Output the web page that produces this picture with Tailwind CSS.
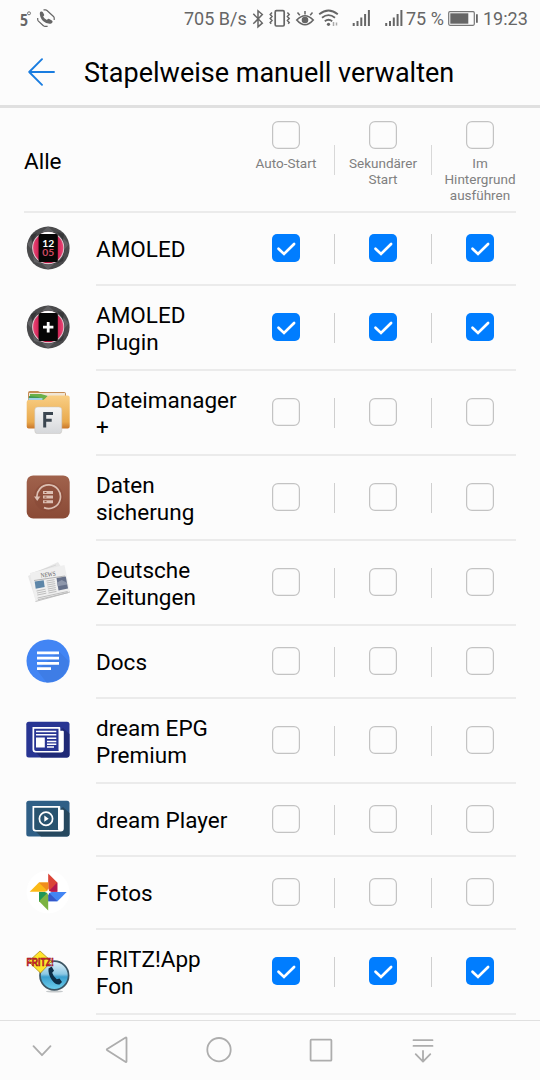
<!DOCTYPE html>
<html lang="de">
<head>
    <meta charset="UTF-8">
    <meta name="viewport" content="width=device-width, initial-scale=1.0">
    <title>Stapelweise manuell verwalten</title>
    <script src="https://cdn.jsdelivr.net/npm/@tailwindcss/browser@4"></script>
</head>
<body class="w-[540px] h-[1080px] overflow-hidden bg-[#fcfcfc] font-['Roboto',sans-serif] text-black flex flex-col">

    <!-- Icon sprites -->
    <svg width="0" height="0" class="absolute">
        <defs>
            <linearGradient id="pink" x1="0" x2="1" y1="0" y2="0"><stop offset="0" stop-color="#f0487a"/><stop offset=".3" stop-color="#b8103f"/><stop offset=".7" stop-color="#b8103f"/><stop offset="1" stop-color="#f0487a"/></linearGradient>
            <linearGradient id="folder" x1="0" x2="0" y1="0" y2="1"><stop offset="0" stop-color="#f9cf85"/><stop offset=".8" stop-color="#e9a94c"/><stop offset="1" stop-color="#c9762a"/></linearGradient>
            <linearGradient id="tile" x1="0" x2="0" y1="0" y2="1"><stop offset="0" stop-color="#f6f6f6"/><stop offset="1" stop-color="#d5d7da"/></linearGradient>
            <linearGradient id="brown" x1="0" x2="0" y1="0" y2="1"><stop offset="0" stop-color="#a0624c"/><stop offset="1" stop-color="#8a4a36"/></linearGradient>
            <linearGradient id="ball" x1="0" x2="0" y1="0" y2="1"><stop offset="0" stop-color="#e4f3fa"/><stop offset=".45" stop-color="#8cc8e4"/><stop offset=".55" stop-color="#3b9fce"/><stop offset="1" stop-color="#6fd0ee"/></linearGradient>
        </defs>

        <symbol id="amoled" viewBox="0 0 44 44">
            <circle cx="22.2" cy="22" r="21.4" fill="#4a4a4c"/>
            <path d="M22 .6 16 6h12zM22 43.4 16 38h12zM1 18l6-6-1 12zM43 18l-6-6 1 12zM8 36l8 2-9-8z" fill="#606063"/>
            <path d="M5 9l6-2-5 10zM38 8l-7-2 6 8zM37 35l-7 3 8-8z" fill="#363638"/>
            <circle cx="22.2" cy="22" r="16.6" fill="#333335"/>
            <circle cx="22.2" cy="22" r="15.6" fill="url(#pink)" stroke="#d9c3ca" stroke-width="1.1"/>
            <path d="M14 8.5a16 16 0 0 1 16.4 0z" fill="#fff"/>
            <rect x="12.6" y="8" width="19.2" height="28" rx="1.5" fill="#060606"/>
        </symbol>

        <symbol id="plugin" viewBox="0 0 44 44">
            <use href="#amoled" width="44" height="44"/>
            <path d="M22.2 17v10.4M17 22.2h10.4" stroke="#fff" stroke-width="2.8"/>
        </symbol>

        <symbol id="files" viewBox="0 0 44 44">
            <path d="M2 3q0-2 2-2h8l2 1h24q2 0 2 2v10H2z" fill="#c68d55"/>
            <path d="M3 3h36v10H3z" fill="#f1e6d6"/>
            <path d="M4 4h11l7 2-4 5H4z" fill="#6bb04a"/>
            <path d="M3 6l9 1 5 2-3 2H3z" fill="#3f9a55"/>
            <path d="M2.5 8h14v4h-14z" fill="#9fd0e6"/>
            <path d="M.7 12q0-2 2-2h13.500q1.500 0 3-1.500l2-2q1-1 2.500-1H41.700q2 0 2 2V36.500q0 2-2 2H2.700q-2 0-2-2z" fill="url(#folder)"/>
            <rect x="8.800" y="17" width="27" height="26.800" rx="3" fill="url(#tile)" stroke="#c8c4bd" stroke-width=".5"/>
            <path d="M18.700 37.500V23.600h8.300M18.700 30.300h7" fill="none" stroke="#3b4650" stroke-width="3"/>
        </symbol>

        <symbol id="backup" viewBox="0 0 44 44">
            <rect x=".7" y=".4" width="43" height="43" rx="6.500" fill="url(#brown)"/>
            <circle cx="22.500" cy="22" r="14.500" fill="#854735" opacity=".5"/>
            <path d="M11 23.500A11.800 11.800 0 1 1 18 32.600" fill="none" stroke="#dcbfb2" stroke-width="1.700"/>
            <path d="M8 21.500h6.400L11.200 26z" fill="#dcbfb2"/>
            <path d="M17 16h10v3H17zM17 20.600h10v3H17zM17 25.200h10v3H17z" fill="#dcbfb2"/>
            <path d="M18.500 17.500h2M18.500 22.100h2M18.500 26.700h2" stroke="#8a4a36" stroke-width="1"/>
        </symbol>

        <symbol id="news" viewBox="0 0 44 44">
            <path d="M2 16 32 2l5 8-28 28z" fill="#e8e8e8"/>
            <path d="M4 14l26-9M5 17l26-9" stroke="#cfcfcf" stroke-width=".7"/>
            <path d="M4 13 38.500 5 44 32 9.500 41.500z" fill="#efefef"/>
            <path d="M9.500 41.500 44 32" stroke="#c4c4c4"/>
            <path d="M8 20.500l31-4.500" stroke="#999" stroke-width=".7"/>
            <path d="M8.700 21.600l9-1.300 1 6.700-9 1.800z" fill="#5d86a8"/>
            <path d="M30.500 18l9.300-1.400 2.200 11.800-9.500 2.200z" fill="#66718a"/>
            <path d="M31.200 22.500l4.500-2.500 5 2.500.5 2-9.500 1.800z" fill="#8e97ab"/>
            <path d="M20.500 21l8-1.300M20.800 23l8-1.300M21.200 25l8-1.400M21.500 27l8-1.400M21.800 29l8-1.400M22.100 31l8-1.500M10.500 31l9-1.800M11 33l9-1.800M11.300 35l9-1.800M11.600 38l30-6.500M12 39.700l30-7M22.500 33l8-1.600" stroke="#b8b8b8" stroke-width=".9"/>
        </symbol>

        <symbol id="docs" viewBox="0 0 44 44">
            <circle cx="22.100" cy="22" r="21.600" fill="#4285f4"/>
            <path d="M33 12.600 42.500 22a21 21 0 0 1-22 21.400L11 31z" fill="#3e7de6"/>
            <path d="M11 12.500h22v2.800H11zM11 17.700h22v2.800H11zM11 23h22v2.800H11zM11 28.200h14V31H11z" fill="#fff"/>
        </symbol>

        <symbol id="epg" viewBox="0 0 44 44">
            <rect x=".3" y="3.700" width="43.200" height="35.700" rx="2.500" fill="#283593"/>
            <path d="M37 10l6.500 6v21q0 2.400-2.500 2.400H15L8 33z" fill="#1f2976"/>
            <path d="M6.500 9h27q.8 0 .8.800v3h2.500q1 0 1 1V31.500q0 3-3 3H9.500q-3 0-3-3z" fill="#fff"/>
            <path d="M8.200 10.800h24.300V31.500q0 1.500.6 1.500H10q-1.800 0-1.800-1.800z" fill="#283593"/>
            <path d="M10 12.800h20.300v1.500H10zM10 16h20.300v1.500H10zM10 19.500h8.800V29.500H10zM21 19.500h9.300V21H21zM21 22.700h9.300v1.500H21zM21 25.600h9.300v1.500H21zM21 28.300h7v1.500h-7z" fill="#fff"/>
        </symbol>

        <symbol id="player" viewBox="0 0 44 44">
            <rect x=".3" y="3.700" width="43.200" height="35.700" rx="2.500" fill="#2f5f86"/>
            <path d="M37 10l6.500 6v21q0 2.400-2.500 2.400H15L8 33z" fill="#26485f"/>
            <path d="M6.500 9h27q.8 0 .8.800v3h2.500q1 0 1 1V31.500q0 3-3 3H9.500q-3 0-3-3z" fill="#fff"/>
            <path d="M8.200 10.800h23.800V31.500q0 1.500.6 1.500H10q-1.800 0-1.800-1.800z" fill="#28536f"/>
            <circle cx="20" cy="21.700" r="6.600" fill="none" stroke="#fff" stroke-width="1.700"/>
            <path d="M18.300 18.600v6.200l4.400-3.100z" fill="#fff"/>
        </symbol>

        <symbol id="fotos" viewBox="0 0 44 44">
            <circle cx="22" cy="22" r="21.500" fill="#fff"/>
            <path d="M22.200 3.500 31.300 12.500V21.800H22.200z" fill="#db4437"/>
            <path d="M31.300 12.500V21.800H22.200z" fill="#b3174f"/>
            <path d="M40.700 22 31.500 31.300H22.200V22z" fill="#4285f4"/>
            <path d="M31.500 31.300H22.200V22z" fill="#3557c9"/>
            <path d="M22.200 40.500 13 31.300V22H22.200z" fill="#7cb342"/>
            <path d="M13 31.300V22H22.200z" fill="#1f9657"/>
            <path d="M3.700 21.800 12.900 12.600H22.200V21.800z" fill="#fbb917"/>
            <path d="M12.900 12.600H22.200V21.800z" fill="#f08c1c"/>
            <path d="M22.200 18.600l1 2.300 2.400 1-2.400 1-1 2.400-1-2.400-2.400-1 2.400-1z" fill="#fff"/>
        </symbol>

        <symbol id="fritz" viewBox="0 0 44 44">
            <ellipse cx="28.500" cy="42.500" rx="8.500" ry="1" fill="#c5c9cb"/>
            <circle cx="28.300" cy="26.500" r="14.300" fill="url(#ball)" stroke="#3c5563" stroke-width="1.700"/>
            <path d="M14 2 25.500 12.500 14.500 24 2.500 12.500z" fill="#ffe52c" stroke="#b08d1c" stroke-width=".8"/>
            <path d="M22.500 19.500l3.200-2 2.300 4.200-1.800 2q1.200 4 4.600 6.500l2.700-.8 2.500 3.500-2.500 2.600q-4 .6-7.800-4.800-3.800-5.600-3.200-11.200z" fill="#0d2d45"/>
        </symbol>

        <symbol id="box-off" viewBox="0 0 28 28">
            <rect x=".6" y=".6" width="26.800" height="26.800" rx="5.400" fill="none" stroke="#c3c3c3" stroke-width="1.200"/>
        </symbol>
        <symbol id="box-on" viewBox="0 0 28 28">
            <rect width="28" height="28" rx="5" fill="#007dff"/>
            <path d="M6.500 14.700 12 19.900 22.100 10" fill="none" stroke="#fff" stroke-width="2.700" stroke-linecap="round"/>
        </symbol>
    </svg>

    <!-- Status bar -->
    <div class="h-[38px] shrink-0 flex items-center text-[18px] leading-none text-[#666]">
        <svg width="40" height="38" viewBox="18 0 40 38" class="ml-[18px] shrink-0" fill="none" stroke="#666">
            <text x="20" y="25.500" font-family="Noto Sans" font-weight="700" font-size="16" textLength="8" lengthAdjust="spacingAndGlyphs" fill="#666" stroke="none">5</text>
            <circle cx="29" cy="13.300" r="1.500" stroke-width=".9"/>
            <path d="M39.800 13.200q0-1.300 1.200-1.700 1.300-.3 1.900.8l1.200 2.200q.4.900-.4 1.600l-.6.500q1.200 2.300 3.900 3.300l.7-.8q.7-.7 1.600-.2l2.600 1.500q1 .7.600 1.800-.6 1.400-2 1.500-4.200.3-7.500-2.700-3.200-3.200-3.200-7.800z" fill="#666" stroke="none"/>
            <path d="M43.500 9.900h2q.8 0 1.500.6l6.500 6q.7.700.7 1.500v2M37.700 18v1.500q0 .9.700 1.600l5 4.600q.7.700 1.700.7h2.500" stroke-width="1.200"/>
        </svg>
        <span class="ml-[126px] w-[62px] whitespace-nowrap">705 B/s</span>
        <svg width="158" height="38" viewBox="246 0 158 38" class="shrink-0" fill="none" stroke="#666" stroke-width="1.500">
            <path d="M253.300 13.800l9 9.300-4.300 3.700V10.800l4.300 3.700-9 9.300"/>
            <rect x="275.200" y="10.700" width="9" height="15.300" rx="1.200" stroke-width="1.700"/>
            <path d="M272 12.500l-1.800 2 1.800 2-1.800 2 1.800 2-1.800 2 1 1.200M287.400 12.500l1.800 2-1.800 2 1.800 2-1.800 2 1.800 2-1 1.200" stroke-width="1.500"/>
            <path d="M296.800 20q8.200-8.500 16.400 0-8.200 9.500-16.400 0z" stroke-width="1.700"/>
            <circle cx="305" cy="20" r="3.300" fill="#666" stroke="none"/>
            <path d="M305 14.500v-3.500M299.800 15.300l-2.300-2.800M310.200 15.300l2.300-2.800"/>
            <path d="M319.200 14.300q9.300-7.500 18.600 0M322 17.800q6.500-5.300 13 0M324.800 21.200q3.700-3 7.400 0" stroke-width="1.800"/>
            <circle cx="328.500" cy="24.300" r="1.600" fill="#666" stroke="none"/>
            <path d="M333.500 22v4M336.500 22.500v3" stroke="#aaa"/>
            <path d="M352.700 23h2v3h-2zM356.500 21h2v5h-2zM360.300 17.500h2V26h-2zM364.100 14h2v12h-2zM367.900 10h2v16h-2zM385.200 23h2v3h-2zM389 21h2v5h-2zM392.800 17.500h2V26h-2zM396.600 14h2v12h-2zM400.400 10h2v16h-2z" fill="#666" stroke="none"/>
        </svg>
        <span class="ml-[2px] w-[40px] whitespace-nowrap">75 %</span>
        <svg width="34" height="38" viewBox="446 0 34 38" class="shrink-0">
            <rect x="448.700" y="11.700" width="25.600" height="13.600" rx="1.200" fill="none" stroke="#777" stroke-width="1.200"/>
            <path d="M450.300 13.300h18v10.400h-18z" fill="#666"/>
            <path d="M476 14.300h1.800v8.400H476z" fill="#666"/>
        </svg>
        <span class="ml-[3px]">19:23</span>
    </div>

    <!-- Title bar -->
    <header class="h-[70px] shrink-0 border-b-[3px] border-[#e0e0e0] flex items-center">
        <svg width="28" height="28" viewBox="0 0 28 28" class="ml-[28px]" fill="none" stroke="#1a7de0" stroke-width="1.900" stroke-linecap="round" stroke-linejoin="round">
            <path d="M14 1.200 1.200 14 14 26.800M1.200 14H26"/>
        </svg>
        <h1 class="ml-[28px] pt-[2px] text-[27px] leading-8 whitespace-nowrap">Stapelweise manuell verwalten</h1>
    </header>

    <main class="h-[912px] shrink-0 overflow-hidden">
        <!-- "Alle" row with the column captions -->
        <div class="ml-6 mr-6 h-[105px] border-b-2 border-[#ebebeb] flex">
            <div class="w-[214px] flex items-center text-[22.500px]"><span class="mt-1">Alle</span></div>
            <div class="w-[97px] flex">
                <div class="w-[96px] pt-[13px] text-center text-[13.500px] leading-4 text-[#808080]">
                    <svg width="28" height="28" class="mx-auto mb-[6px]"><use href="#box-off"/></svg>Auto-Start
                </div>
                <div class="w-px h-[30px] mt-[37px] bg-[#d8d8d8]"></div>
            </div>
            <div class="w-[97px] flex">
                <div class="w-[96px] pt-[13px] text-center text-[13.500px] leading-4 text-[#808080]">
                    <svg width="28" height="28" class="mx-auto mb-[6px]"><use href="#box-off"/></svg>Sekundärer<br>Start
                </div>
                <div class="w-px h-[30px] mt-[37px] bg-[#d8d8d8]"></div>
            </div>
            <div class="w-[96px] -mr-3 shrink-0 pt-[13px] text-center text-[13.500px] leading-4 text-[#808080]">
                <svg width="28" height="28" class="mx-auto mb-[6px]"><use href="#box-off"/></svg>Im<br>Hintergrund<br>ausführen
            </div>
        </div>

        <div id="app-list"></div>
    </main>

    <!-- Navigation bar -->
    <nav class="h-[60px] shrink-0 border-t border-[#e0e0e0]">
        <svg width="540" height="59" viewBox="0 1021 540 59" fill="none" stroke="#adadad" stroke-width="1.800" stroke-linecap="round" stroke-linejoin="round">
            <path d="M33.500 1046.200l8.500 9 8.500-9"/>
            <path d="M126.500 1039.200v23.600q0 .8-.8.400L107.200 1051.500q-.9-.6 0-1.200l18.500-11.400q.8-.4.8.300z" transform="translate(0 -1.300)"/>
            <circle cx="219" cy="1049.700" r="11.700"/>
            <rect x="310.600" y="1039.700" width="20.800" height="21" rx=".8"/>
            <path d="M413.500 1040.200h19M413.500 1045.900h19M423 1051v10.400M415.700 1054.200l7.300 7.400 7.300-7.400"/>
        </svg>
    </nav>

    <script>
        const apps = [
            { icon: 'amoled', name: 'AMOLED', on: true, label: '<text x="22.2" y="20.600" text-anchor="middle" font-family="Lato" font-weight="700" font-size="10.300" fill="#fff">12</text><text x="22.2" y="30.200" text-anchor="middle" font-family="Lato" font-weight="700" font-size="10.300" fill="#d04a62">05</text>' },
            { icon: 'plugin', name: 'AMOLED<br>Plugin', on: true },
            { icon: 'files', name: 'Dateimanager<br>+' },
            { icon: 'backup', name: 'Daten<br>sicherung' },
            { icon: 'news', name: 'Deutsche<br>Zeitungen', label: '<text x="15" y="17.700" font-family="Liberation Serif" font-size="6.600" fill="#555" textLength="15" lengthAdjust="spacingAndGlyphs" transform="rotate(-8 15 17)">NEWS</text>' },
            { icon: 'docs', name: 'Docs' },
            { icon: 'epg', name: 'dream EPG<br>Premium' },
            { icon: 'player', name: 'dream Player' },
            { icon: 'fotos', name: 'Fotos' },
            { icon: 'fritz', name: 'FRITZ!App<br>Fon', on: true, label: '<text x=".5" y="17" font-family="Liberation Sans" font-weight="700" font-size="11.500" textLength="27.500" lengthAdjust="spacingAndGlyphs" fill="#dd2230" stroke="#7c1018" stroke-width=".5">FRITZ!</text>' }
        ];

        const divider = '<div class="w-px h-[30px] mx-[34px] bg-[#cfcfcf]"></div>';

        document.getElementById('app-list').innerHTML = apps.map(app => {
            const height = app.name.includes('<br>') ? 'h-[85px]' : 'h-[73px]';
            const box = `<svg width="28" height="28" class="shrink-0 mb-px"><use href="#${app.on ? 'box-on' : 'box-off'}"/></svg>`;
            return `
                <div class="flex ${height}">
                    <svg width="44" height="44" class="ml-[26px] mr-[26px] mb-[3px] shrink-0 self-center"><use href="#${app.icon}"/>${app.label || ''}</svg>
                    <div class="w-[420px] border-b-2 border-[#ebebeb] flex items-center">
                        <div class="w-[176px] shrink-0 text-[22.500px] leading-[27px] pt-[2.500px] whitespace-nowrap">${app.name}</div>
                        ${box}${divider}${box}${divider}${box}
                    </div>
                </div>`;
        }).join('');
    </script>
</body>
</html>
